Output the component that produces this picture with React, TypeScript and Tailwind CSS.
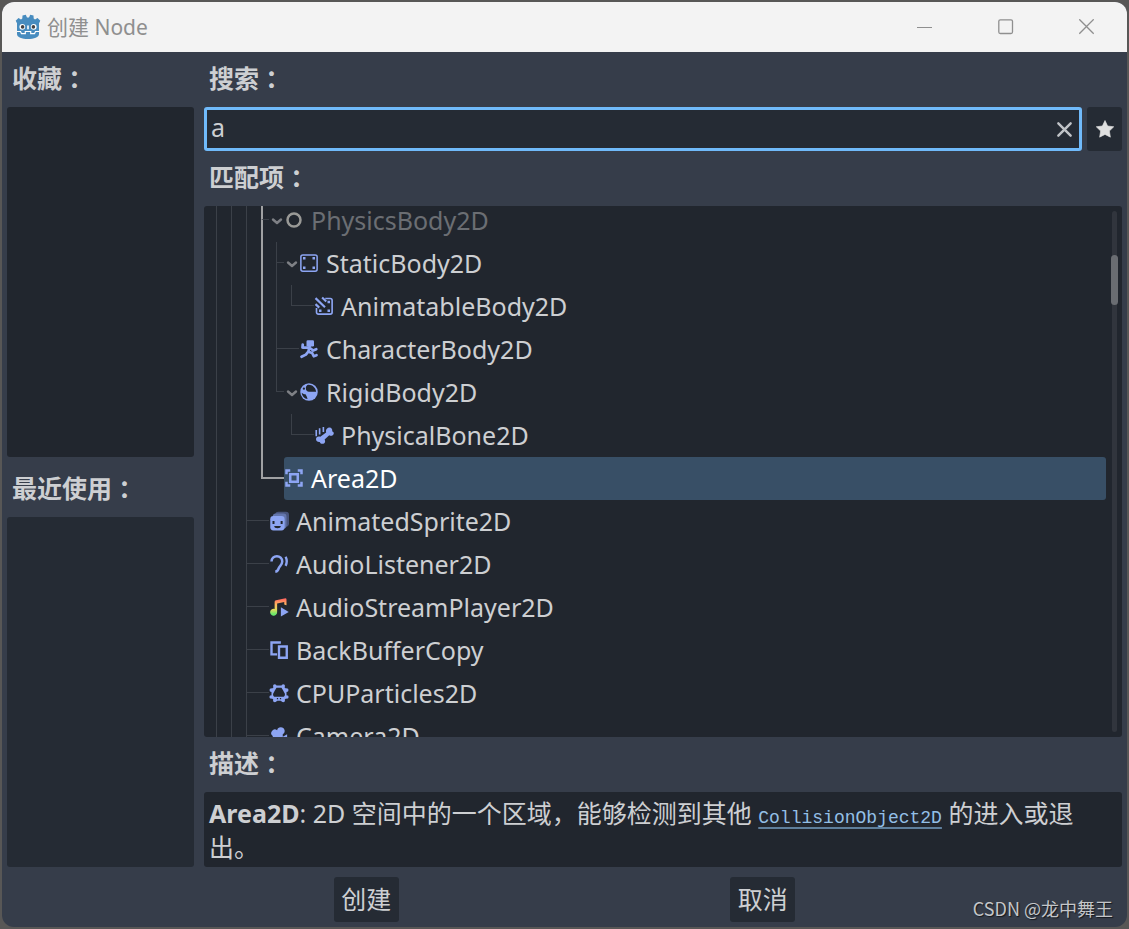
import React from "react";

const BLUE = "#8da5f3";

type IconProps = { children: React.ReactNode };

function NodeIcon({ children }: IconProps) {
  return (
    <svg viewBox="0 0 16 16" className="size-5 shrink-0" fill={BLUE} aria-hidden="true">
      {children}
    </svg>
  );
}

const icons = {
  physics: (
    <NodeIcon>
      <circle cx="8" cy="8" r="5.2" fill="none" stroke="#999996" strokeWidth="2" />
    </NodeIcon>
  ),
  staticBody: (
    <NodeIcon>
      <rect x="1.5" y="1.5" width="13" height="13" rx="1.5" fill="none" stroke={BLUE} strokeWidth="1.2" />
      <path d="M3.2 3.2h2v2h-2zm7.600 0h2v2h-2zM3.200 10.800h2v2h-2zm7.600 0h2v2h-2z" />
    </NodeIcon>
  ),
  animatable: (
    <NodeIcon>
      <path
        d="M9 2h4a1.500 1.500 0 0 1 1.500 1.500V13a1.500 1.500 0 0 1-1.500 1.500H3.500A1.500 1.500 0 0 1 2 13V9.500"
        fill="none"
        stroke={BLUE}
        strokeWidth="1.300"
      />
      <path d="M10.800 3.800h2v2h-2zM4 10.800h2v2H4zm6.800 0h2v2h-2z" />
      <path d="M1.200 1.700 8.800 9M6.500 1.200l3.300 3.200M1.200 6.500l3 2.800" fill="none" stroke={BLUE} strokeWidth="1.700" />
    </NodeIcon>
  ),
  character: (
    <NodeIcon>
      <path d="M7 1h4a1 1 0 0 1 1 1v3a1 1 0 0 1-1 1H7a1 1 0 0 1-1-1V2a1 1 0 0 1 1-1z" />
      <path
        d="M8.500 6 7.500 10M3 4.500 2.800 6.800h5M8.500 7l2.800 2.200 2.500-1M7.500 10l-2 2.500L2 14.200M7.500 10.200l3 1 1.300 2.600 2.200-.8"
        fill="none"
        stroke={BLUE}
        strokeWidth="2.200"
        strokeLinejoin="round"
        strokeLinecap="round"
      />
    </NodeIcon>
  ),
  rigid: (
    <NodeIcon>
      <circle cx="8" cy="8" r="7" />
      <path
        fill="#21262e"
        d="M6.700 2.300C9.800 1.600 13.300 4 13.700 7.700H8.500A2.500 2.500 0 0 1 5.500 5C5.300 4 5.900 3 6.700 2.300zM2.200 8.500c1 .9 2 1.200 3 1.300.6.800 1.300 2.300 1.600 3.800C4.400 13.200 2.300 11.200 2.200 8.500z"
      />
      <circle cx="3.900" cy="5.300" r="0.900" fill="#21262e" />
    </NodeIcon>
  ),
  bone: (
    <NodeIcon>
      <path d="M10.500 2.800a2.300 2.300 0 0 1 3.700.2c.5.700.5 1.300.3 1.900 1 .3 1.500 1.100 1.300 2.100a2.300 2.300 0 0 1-3.600 1.200L8.500 11.500c.7 1.200.5 2.500-.5 3.200-1.300.8-3 .3-3.400-1.200-1.600.2-2.900-.6-3-2.100-.1-1.700 1.600-2.700 3.400-2l4.700-3.500c-.3-1.200-.1-2.200.8-3.100z" />
      <path d="M1.800 4v5M4.500 2.500v5M7.500 1.500v4" stroke={BLUE} strokeWidth="1.300" fill="none" />
    </NodeIcon>
  ),
  area: (
    <NodeIcon>
      <path
        fillRule="evenodd"
        d="M1 1h4v2H3v2H1zm10 0h4v4h-2V3h-2zM4 4h8v8H4zm2 2v4h4V6zM1 11h2v2h2v2H1zm12 0h2v4h-4v-2h2z"
      />
    </NodeIcon>
  ),
  animatedSprite: (
    <NodeIcon>
      <rect x="5" y="0.500" width="11" height="12" rx="2.500" fill="#48547c" />
      <rect x="3" y="2" width="11" height="12" rx="2.500" fill="#6476ad" />
      <rect x="1" y="4" width="11.500" height="11.500" rx="2.500" />
      <path d="M2.800 8h1.600v2.300H2.800zm6.500 0h1.600v2.300H9.300zM4.200 12h5.200a2.600 1.800 0 0 1-5.200 0z" fill="#21262e" />
    </NodeIcon>
  ),
  listener: (
    <NodeIcon>
      <path
        d="M2 6a4.300 4.300 0 0 1 8.600 0c0 2.400-1.500 3.300-2.400 4.500-.9 1.200-.5 3.500-3.200 3.500"
        fill="none"
        stroke={BLUE}
        strokeWidth="2"
      />
      <path d="M13.300 2.200c1.100 2.200 1.100 5 0 7.300" fill="none" stroke={BLUE} strokeWidth="1.900" />
    </NodeIcon>
  ),
  stream: (
    <NodeIcon>
      <defs>
        <linearGradient id="note" x1="0" y1="1" x2="0" y2="15" gradientUnits="userSpaceOnUse">
          <stop offset="0" stopColor="#ff5f5f" />
          <stop offset="0.350" stopColor="#ffb65f" />
          <stop offset="0.650" stopColor="#e1da5b" />
          <stop offset="0.900" stopColor="#6be86b" />
        </linearGradient>
      </defs>
      <path
        fill="url(#note)"
        d="M13.200 1 5.600 2.500A1.300 1.300 0 0 0 4.500 3.800v5.700A2.800 2.800 0 1 0 6.500 12.200V5.200l5.700-1.200v2l1.800.6V1.900a1 1 0 0 0-.8-.9z"
      />
      <path d="M9.500 8.200v7.300l6.300-3.600z" />
    </NodeIcon>
  ),
  backBuffer: (
    <NodeIcon>
      <path d="M9.500 2H2v9.500h4.500" fill="none" stroke={BLUE} strokeWidth="1.900" />
      <path d="M8 5.200h6.200v9H8z" fill="none" stroke={BLUE} strokeWidth="1.900" />
    </NodeIcon>
  ),
  particles: (
    <NodeIcon>
      <path
        fillRule="evenodd"
        d="M5 2h6l3 3v7l-3 2.500H5L2 12V5zM6 3.800 4.800 5.800 3.300 8.500c-.3 1.500.5 2.500 1.700 2.500h6c1.200 0 2-1 1.700-2.500l-1.500-2.700L10 3.800z"
      />
      <circle cx="4.600" cy="2.300" r="1.400" />
      <circle cx="11.400" cy="2.300" r="1.400" />
      <circle cx="1.900" cy="5.600" r="1.500" />
      <circle cx="14.100" cy="5.600" r="1.500" />
      <circle cx="1.700" cy="11.200" r="1.400" />
      <circle cx="14.300" cy="11.200" r="1.400" />
      <circle cx="4.600" cy="14" r="1.400" />
      <circle cx="11.400" cy="14" r="1.400" />
      <path d="M6.300 12h1v1h-1zm2.400 0h1v1h-1zM6.500 14.200h3V16h-3z" fill="#21262e" />
    </NodeIcon>
  ),
  camera: (
    <NodeIcon>
      <path d="M9.500 1a3 3 0 0 0-3 2.300A2.800 2.800 0 1 0 3 8v4.500a1.500 1.500 0 0 0 1.500 1.500h5a1.500 1.500 0 0 0 1.500-1.500v-1l3.500 2v-7L11 8.500V6.600A3 3 0 0 0 9.500 1z" />
    </NodeIcon>
  ),
};

type Item = {
  name: string;
  icon: keyof typeof icons;
  guides: string[];
  connector: "through" | "end" | "pathThrough" | "pathEnd";
  open?: boolean;
  muted?: boolean;
  selected?: boolean;
};

const DIM = "border-l border-[#3b4048]";
const PATH = "border-l-2 border-[#a0a1a3]";
const NONE = "";

const items: Item[] = [
  { name: "PhysicsBody2D", icon: "physics", guides: [DIM, DIM, DIM], connector: "pathThrough", open: true, muted: true },
  { name: "StaticBody2D", icon: "staticBody", guides: [DIM, DIM, DIM, PATH], connector: "through", open: true },
  { name: "AnimatableBody2D", icon: "animatable", guides: [DIM, DIM, DIM, PATH, DIM], connector: "end" },
  { name: "CharacterBody2D", icon: "character", guides: [DIM, DIM, DIM, PATH], connector: "through" },
  { name: "RigidBody2D", icon: "rigid", guides: [DIM, DIM, DIM, PATH], connector: "end", open: true },
  { name: "PhysicalBone2D", icon: "bone", guides: [DIM, DIM, DIM, PATH, NONE], connector: "end" },
  { name: "Area2D", icon: "area", guides: [DIM, DIM, DIM], connector: "pathEnd", selected: true },
  { name: "AnimatedSprite2D", icon: "animatedSprite", guides: [DIM, DIM], connector: "through" },
  { name: "AudioListener2D", icon: "listener", guides: [DIM, DIM], connector: "through" },
  { name: "AudioStreamPlayer2D", icon: "stream", guides: [DIM, DIM], connector: "through" },
  { name: "BackBufferCopy", icon: "backBuffer", guides: [DIM, DIM], connector: "through" },
  { name: "CPUParticles2D", icon: "particles", guides: [DIM, DIM], connector: "through" },
  { name: "Camera2D", icon: "camera", guides: [DIM, DIM], connector: "through" },
];

const connectorTop = {
  through: "h-[21px] border-b border-l border-[#3b4048]",
  end: "h-[21px] border-b border-l border-[#3b4048]",
  pathThrough: "h-[21px] border-b border-l-2 border-b-[#3b4048] border-l-[#a0a1a3]",
  pathEnd: "h-[22px] border-b-2 border-l-2 border-[#a0a1a3]",
};

const connectorBottom = {
  through: DIM,
  end: NONE,
  pathThrough: PATH,
  pathEnd: NONE,
};

function Connector({ item }: { item: Item }) {
  return (
    <div className="flex w-[23px] shrink-0">
      <div className={item.open ? "flex w-2 flex-col" : "flex w-full flex-col"}>
        <div className={connectorTop[item.connector]} />
        <div className={`flex-1 ${connectorBottom[item.connector]}`} />
      </div>
      {item.open && (
        <button aria-label={`折叠 ${item.name}`} className="flex flex-1 items-center justify-center">
          <svg viewBox="0 0 12 12" className="size-3" fill="none" stroke="#7e8085" strokeWidth="2.400" strokeLinecap="round" strokeLinejoin="round">
            <path d="M2 4.500 6 8l4-3.500" />
          </svg>
        </button>
      )}
    </div>
  );
}

function TreeRow({ item }: { item: Item }) {
  const tone = item.selected
    ? "rounded-[3px] bg-[#384f66] text-white"
    : item.muted
      ? "text-[#6b6e73]"
      : "text-[#cdcfd2]";
  return (
    <li role="treeitem" aria-selected={!!item.selected} className="flex h-[43px] shrink-0 pl-3">
      {item.guides.map((guide, i) => (
        <div key={i} className={`w-[15px] shrink-0 ${guide}`} />
      ))}
      <Connector item={item} />
      <div className={`flex flex-1 items-center gap-[7px] pb-[2px] ${tone}`}>
        {icons[item.icon]}
        <span>{item.name}</span>
      </div>
    </li>
  );
}

function Heading({ text, id, htmlFor }: { text: string; id?: string; htmlFor?: string }) {
  const className = "flex h-[55px] shrink-0 items-center px-[5px] pb-1 font-bold";
  const content = (
    <>
      {text}
      <span className="font-['Noto_Sans_CJK_JP',sans-serif]">：</span>
    </>
  );
  return htmlFor ? (
    <label htmlFor={htmlFor} className={className}>{content}</label>
  ) : (
    <h2 id={id} className={className}>{content}</h2>
  );
}

function GodotLogo() {
  return (
    <svg viewBox="0 0 26 26" className="size-[26px]" aria-hidden="true">
      <path
        fill="#478cbf"
        d="M7.500 1.500 10.800.8l1.200 2.600h2L15.200.8l3.300.7.200 3 1.300.9L22.500 4l2.800 2.800-1.300 2.400V20c0 3.500-5 5-11 5S2 23.500 2 20V9.200L.7 6.800 3.500 4 6 5.400l1.300-.9z"
      />
      <path d="M2 17.500h3.500l1 2.200h3.800v-2.200h5.400v2.200h3.800l1-2.200H24" fill="none" stroke="#fff" strokeWidth="1.200" />
      <circle cx="7.300" cy="12.800" r="2.900" fill="#fff" />
      <circle cx="18.700" cy="12.800" r="2.900" fill="#fff" />
      <circle cx="7.600" cy="12.900" r="1.800" fill="#414042" />
      <circle cx="18.400" cy="12.900" r="1.800" fill="#414042" />
      <path d="M13 12v2.800" stroke="#fff" strokeWidth="1.600" strokeLinecap="round" />
    </svg>
  );
}

function TitleBar() {
  return (
    <header className="flex h-[50px] shrink-0 items-center bg-[#f3f3f3] pl-[13px] text-[#8f8f8f]">
      <GodotLogo />
      <h1 className="flex-1 pl-[6px] text-[21px]">创建 Node</h1>
      <button aria-label="最小化" className="flex h-full w-[81px] items-center justify-center">
        <svg viewBox="0 0 16 16" className="size-4" stroke="currentColor"><path d="M0 8.500h15" /></svg>
      </button>
      <button aria-label="最大化" className="flex h-full w-[81px] items-center justify-center">
        <svg viewBox="0 0 16 16" className="size-4" fill="none" stroke="currentColor" strokeWidth="1.300"><rect x="0.800" y="0.800" width="13.700" height="13.700" rx="1.500" /></svg>
      </button>
      <button aria-label="关闭" className="flex h-full w-[81px] items-center justify-center">
        <svg viewBox="0 0 16 16" className="size-4" stroke="currentColor" strokeWidth="1.300"><path d="m.3.3 14.400 14.400m0-14.400L.3 14.700" /></svg>
      </button>
    </header>
  );
}

export default function App() {
  return (
    <div className="h-screen min-h-[560px] bg-[#585756] p-[2px] font-['Noto_Sans','Noto_Sans_CJK_SC',sans-serif] text-[25px] leading-[34px] text-[#cdcfd2]">
      <div className="relative flex h-full flex-col overflow-hidden rounded-xl bg-[#363d4a]">
        <TitleBar />
        <main className="flex min-h-0 flex-1 flex-col px-[5px] pb-[5px]">
          <div className="flex min-h-0 flex-1 gap-[10px]">
            <aside className="flex w-[187px] shrink-0 flex-col">
              <Heading text="收藏" id="favorites" />
              <section aria-labelledby="favorites" className="flex-1 rounded-[3px] bg-[#21262e]" />
              <div className="mt-[5px] flex flex-col">
                <Heading text="最近使用" id="recent" />
              </div>
              <section aria-labelledby="recent" className="flex-1 rounded-[3px] bg-[#252b34]" />
            </aside>
            <div className="flex min-w-0 flex-1 flex-col">
              <Heading text="搜索" htmlFor="search" />
              <div className="flex h-11 shrink-0 gap-[5px]">
                <div className="flex min-w-0 flex-1 items-center rounded-[3px] border-[3px] border-[#70bafa] bg-[#252b34] pr-[6px] pl-1">
                  <input id="search" type="text" defaultValue="a" className="min-w-0 flex-1 bg-transparent pb-1 outline-none" />
                  <button aria-label="清除">
                    <svg viewBox="0 0 16 16" className="size-[17px]" fill="none" stroke="#bfc2c6" strokeWidth="2.300" strokeLinecap="round"><path d="m2.200 2.200 11.600 11.600m0-11.600L2.200 13.800" /></svg>
                  </button>
                </div>
                <button aria-label="收藏" className="flex w-[35px] items-center justify-center rounded-[3px] bg-[#252b34]">
                  <svg viewBox="0 0 16 16" className="size-5" fill="#e0e0e0" stroke="#e0e0e0" strokeWidth="0.500" strokeLinejoin="round"><path d="m8 1.200 2.100 4.400 4.900.6-3.500 3.400.8 4.900L8 12.300l-4.300 2.200.8-4.900L1 6.200l4.900-.6z" /></svg>
                </button>
              </div>
              <Heading text="匹配项" id="matches" />
              <div className="flex min-h-0 flex-1 overflow-hidden rounded-[3px] bg-[#21262e]">
                <ul role="tree" aria-labelledby="matches" className="-mt-[7px] flex min-w-0 flex-1 flex-col">
                  {items.map((item) => (
                    <TreeRow key={item.name} item={item} />
                  ))}
                </ul>
                <div className="grid w-4 shrink-0 grid-cols-[7px] py-[5px] pl-[5px]">
                  <div className="col-start-1 row-start-1 mx-px rounded-full bg-[#31353d]" />
                  <div className="col-start-1 row-start-1 mt-11 h-[50px] rounded-full bg-[#6a6d72]" />
                </div>
              </div>
              <Heading text="描述" id="description" />
              <section aria-labelledby="description" className="shrink-0 rounded-[3px] bg-[#21262e] px-[5px] pt-1 pb-[3px]">
                <p>
                  <b>Area2D</b>: 2D 空间中的一个区域，能够检测到其他{" "}
                  <a href="#CollisionObject2D" className="font-['Liberation_Mono',monospace] text-[18px] leading-none text-[#93bfe6] underline decoration-[#5f7f9c] decoration-2 underline-offset-4">CollisionObject2D</a>{" "}
                  的进入或退出。
                </p>
              </section>
            </div>
          </div>
          <footer className="mt-[10px] flex gap-[5px]">
            <div className="flex-1" />
            <button className="h-[45px] w-[65px] rounded-[3px] bg-[#252b34] pb-[2px]">创建</button>
            <div className="flex-1" />
            <button className="h-[45px] w-[65px] rounded-[3px] bg-[#252b34] pb-[2px]">取消</button>
            <div className="flex-1" />
          </footer>
        </main>
        <span className="absolute right-[14px] bottom-[6px] font-['Noto_Sans_CJK_SC',sans-serif] text-[18px] leading-[26px] text-[#c4c6c9] [text-shadow:1px_1px_1px_#15181d]">CSDN @龙中舞王</span>
      </div>
    </div>
  );
}
